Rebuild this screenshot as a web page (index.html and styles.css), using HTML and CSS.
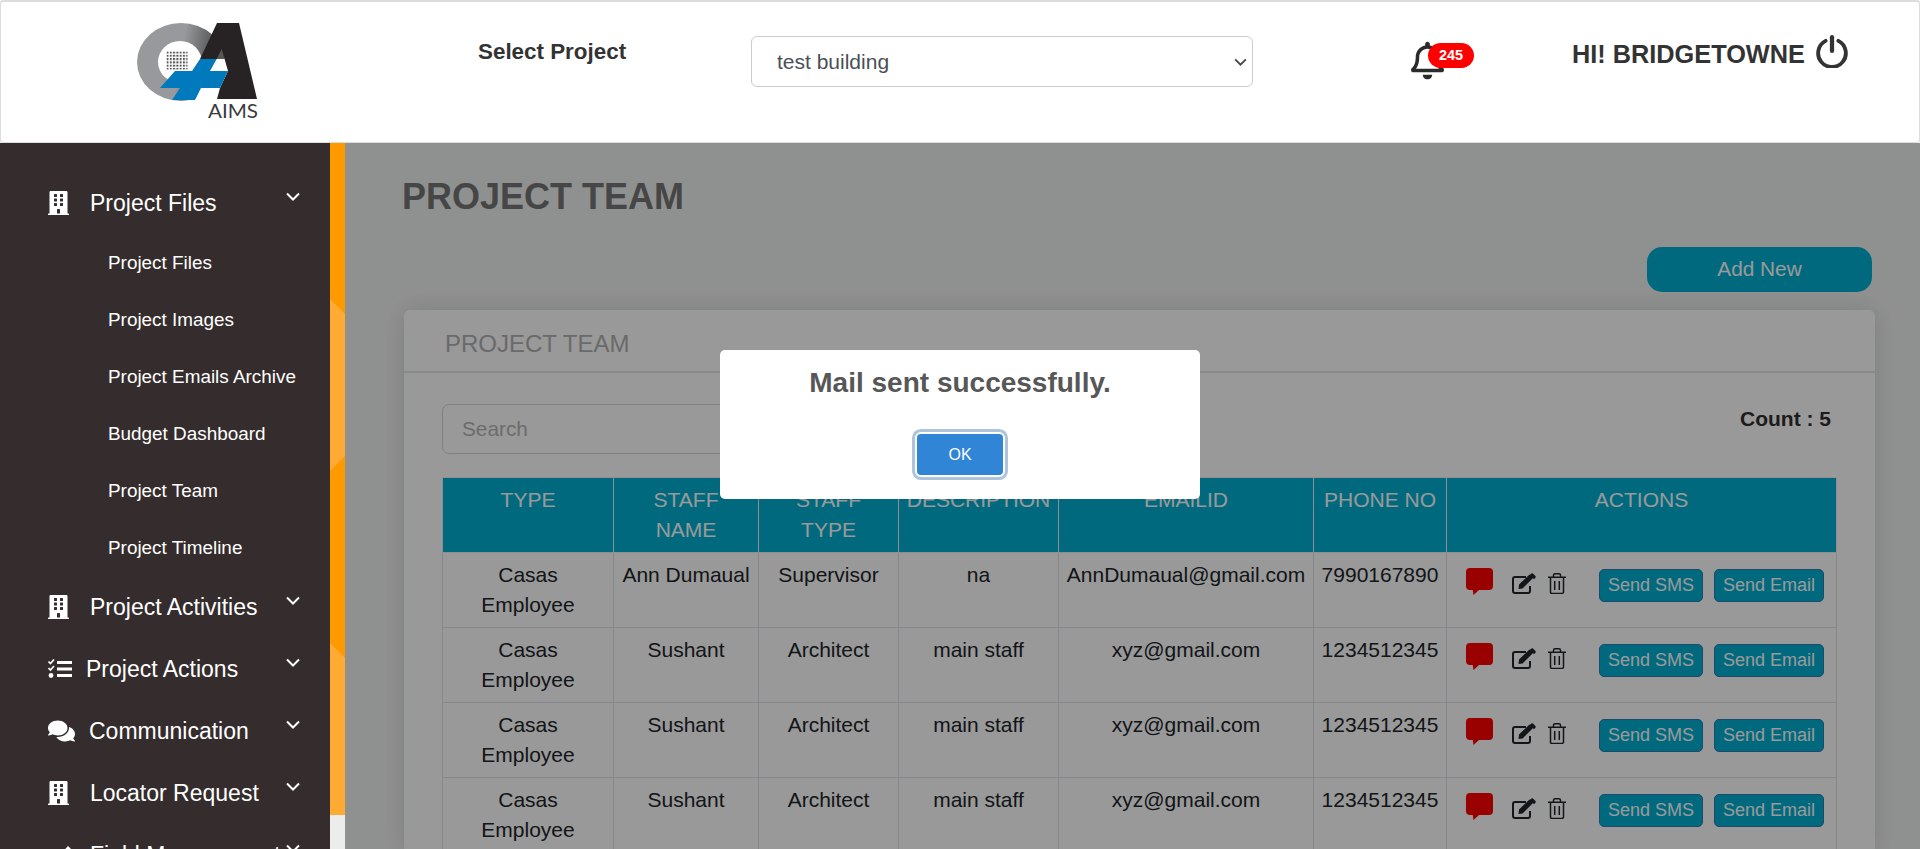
FILE: index.html
```html
<!DOCTYPE html>
<html lang="en">
<head>
<meta charset="utf-8">
<title>Project Team</title>
<link rel="stylesheet" href="styles.css">
</head>
<body>
<svg class="defs" width="0" height="0" aria-hidden="true">
  <symbol id="i-building" viewBox="0 0 448 512"><path d="M436 480h-20V24c0-13.255-10.745-24-24-24H56C42.745 0 32 10.745 32 24v456H12c-6.627 0-12 5.373-12 12v20h448v-20c0-6.627-5.373-12-12-12zM128 76c0-6.627 5.373-12 12-12h40c6.627 0 12 5.373 12 12v40c0 6.627-5.373 12-12 12h-40c-6.627 0-12-5.373-12-12V76zm0 96c0-6.627 5.373-12 12-12h40c6.627 0 12 5.373 12 12v40c0 6.627-5.373 12-12 12h-40c-6.627 0-12-5.373-12-12v-40zm52 148h-40c-6.627 0-12-5.373-12-12v-40c0-6.627 5.373-12 12-12h40c6.627 0 12 5.373 12 12v40c0 6.627-5.373 12-12 12zm76 160h-64v-84c0-6.627 5.373-12 12-12h40c6.627 0 12 5.373 12 12v84zm64-172c0 6.627-5.373 12-12 12h-40c-6.627 0-12-5.373-12-12v-40c0-6.627 5.373-12 12-12h40c6.627 0 12 5.373 12 12v40zm0-96c0 6.627-5.373 12-12 12h-40c-6.627 0-12-5.373-12-12v-40c0-6.627 5.373-12 12-12h40c6.627 0 12 5.373 12 12v40zm0-96c0 6.627-5.373 12-12 12h-40c-6.627 0-12-5.373-12-12V76c0-6.627 5.373-12 12-12h40c6.627 0 12 5.373 12 12v40z"/></symbol>
  <symbol id="i-tasks" viewBox="0 0 24 20"><path d="M9 2h15v3H9zM9 8.500h15v3H9zM9 15h15v3H9z"/><path d="M0.500 2.500l2 2L6 .5M0.500 9l2 2L6 7" fill="none" stroke="currentColor" stroke-width="1.700"/><circle cx="3" cy="16.500" r="2.400"/></symbol>
  <symbol id="i-comments" viewBox="0 0 576 512"><path d="M416 192c0-88.4-93.1-160-208-160S0 103.6 0 192c0 34.3 14.1 65.9 38 92-13.4 30.2-35.5 54.2-35.8 54.5-2.2 2.3-2.8 5.7-1.5 8.7S4.8 352 8 352c36.6 0 66.9-12.3 88.7-25 32.2 15.7 70.3 25 111.3 25 114.9 0 208-71.6 208-160zm122 220c23.9-26 38-57.7 38-92 0-66.9-53.5-124.2-129.3-148.1.9 6.6 1.3 13.3 1.3 20.1 0 105.9-107.7 192-240 192-10.8 0-21.3-.8-31.7-1.9C207.8 439.6 281.8 480 368 480c41 0 79.1-9.2 111.3-25 21.8 12.7 52.1 25 88.7 25 3.2 0 6.1-1.9 7.3-4.8 1.3-2.9.7-6.3-1.5-8.7-.3-.3-22.4-24.2-35.8-54.5z"/></symbol>
  <symbol id="i-chevron" viewBox="0 0 14 9"><path d="M1 1.500l6 6 6-6" fill="none" stroke="currentColor" stroke-width="2"/></symbol>
  <symbol id="i-field" viewBox="0 0 24 24"><path d="M3 22L20 3l3 3L8 22z"/></symbol>
  <symbol id="i-bubble" viewBox="0 0 27 27"><path d="M4 0h19a4 4 0 0 1 4 4v14a4 4 0 0 1-4 4H13l-5.500 5-.8-5H4a4 4 0 0 1-4-4V4a4 4 0 0 1 4-4z"/></symbol>
  <symbol id="i-edit" viewBox="0 0 24 21"><path d="M14 4H3a2 2 0 0 0-2 2v12a2 2 0 0 0 2 2h13a2 2 0 0 0 2-2v-5" fill="none" stroke="currentColor" stroke-width="2"/><path d="M7 11.500L17.500 1.500l3.500 3.500L10.500 15.500l-4 .5zM19 .8a1.500 1.500 0 0 1 2-.2l2.400 2.400a1.500 1.500 0 0 1-.2 2L22 6.200 17.800 2z"/></symbol>
  <symbol id="i-trash" viewBox="0 0 18 21"><path d="M2.500 5v14a1.500 1.500 0 0 0 1.500 1.500h10a1.500 1.500 0 0 0 1.500-1.500V5M0 4.200h18M5.500 4V2.200A1.500 1.500 0 0 1 7 .8h4a1.500 1.500 0 0 1 1.500 1.400V4M6.700 8v9M11.300 8v9" fill="none" stroke="currentColor" stroke-width="1.500"/></symbol>
</svg>

<header class="topbar">
  <svg class="logo" viewBox="130 15 135 110" width="135" height="110" role="img" aria-label="AIMS logo">
    <defs>
      <linearGradient id="ring" x1="0" y1="0" x2="1" y2="0.15">
        <stop offset="0" stop-color="#97999c"/>
        <stop offset="0.55" stop-color="#97999c"/>
        <stop offset="0.8" stop-color="#66686a"/>
        <stop offset="1" stop-color="#555"/>
      </linearGradient>
      <pattern id="dots" x="166.500" y="51.500" width="3.300" height="3.300" patternUnits="userSpaceOnUse">
        <rect width="2" height="2" fill="#555"/>
      </pattern>
    </defs>
    <ellipse cx="181" cy="62" rx="44" ry="39" fill="url(#ring)"/>
    <ellipse cx="180" cy="62" rx="22" ry="21" fill="#fff"/>
    <rect x="166.500" y="51.500" width="21" height="18" fill="url(#dots)"/>
    <path d="M195 88h30l-3 14h-35zM205 59h30v14h-30z" fill="#fff"/>
    <path d="M217 23H239L257 99H217L220 88L228 71L221.700 49L216.700 59H200Z" fill="#272224"/>
    <path d="M200 59H216.700L210 71H228L220 88H201L195 100H172L180 88H160L175 71H192Z" fill="#0079bd"/>
    <text class="logo-text" x="208" y="118" textLength="50" lengthAdjust="spacingAndGlyphs">AIMS</text>
  </svg>
  <div class="project-label">Select Project</div>
  <div class="select-wrap">
    <select class="project-select" aria-label="Select Project"><option>test building</option></select>
    <svg class="select-chev"><use href="#i-chevron"/></svg>
  </div>
  <div class="bell">
    <svg class="bell-icon" viewBox="0 0 448 512"><path d="M439.39 362.29c-19.32-20.76-55.47-51.99-55.47-154.29 0-77.7-54.48-139.9-127.94-155.16V32c0-17.67-14.32-32-31.98-32s-31.98 14.33-31.98 32v20.84C118.56 68.1 64.08 130.3 64.08 208c0 102.3-36.15 133.53-55.47 154.29-6 6.45-8.66 14.16-8.61 21.71.11 16.4 12.98 32 32.1 32h383.8c19.12 0 32-15.6 32.1-32 .05-7.55-2.61-15.27-8.61-21.71zM67.53 368c21.22-27.97 44.42-74.33 44.53-159.42 0-.2-.06-.38-.06-.58 0-61.86 50.14-112 112-112s112 50.14 112 112c0 .2-.06.38-.06.58.11 85.1 23.31 131.46 44.53 159.42H67.53zM224 512c35.32 0 63.97-28.65 63.97-64H160.03c0 35.35 28.65 64 63.97 64z"/></svg>
    <span class="badge">245</span>
  </div>
  <div class="greeting">HI! BRIDGETOWNE</div>
  <svg class="power" viewBox="0 0 30 31"><path d="M9 5.500A13 13 0 1 0 21 5.500" fill="none" stroke="currentColor" stroke-width="3.600" stroke-linecap="round"/><path d="M15 2v13" fill="none" stroke="currentColor" stroke-width="4" stroke-linecap="round"/></svg>
</header>

<div class="shell">
  <nav class="sidebar">
    <div class="nav-main"><svg class="nav-icon building"><use href="#i-building"/></svg><span class="nav-text">Project Files</span><svg class="chev"><use href="#i-chevron"/></svg></div>
    <a class="nav-sub">Project Files</a>
    <a class="nav-sub">Project Images</a>
    <a class="nav-sub">Project Emails Archive</a>
    <a class="nav-sub">Budget Dashboard</a>
    <a class="nav-sub">Project Team</a>
    <a class="nav-sub">Project Timeline</a>
    <div class="nav-main"><svg class="nav-icon building"><use href="#i-building"/></svg><span class="nav-text">Project Activities</span><svg class="chev"><use href="#i-chevron"/></svg></div>
    <div class="nav-main"><svg class="nav-icon tasks"><use href="#i-tasks"/></svg><span class="nav-text">Project Actions</span><svg class="chev"><use href="#i-chevron"/></svg></div>
    <div class="nav-main"><svg class="nav-icon comments"><use href="#i-comments"/></svg><span class="nav-text">Communication</span><svg class="chev"><use href="#i-chevron"/></svg></div>
    <div class="nav-main"><svg class="nav-icon building"><use href="#i-building"/></svg><span class="nav-text">Locator Request</span><svg class="chev"><use href="#i-chevron"/></svg></div>
    <div class="nav-main"><svg class="nav-icon field"><use href="#i-field"/></svg><span class="nav-text">Field Management</span><svg class="chev"><use href="#i-chevron"/></svg></div>
  </nav>
  <svg class="strip" viewBox="0 0 15 706" preserveAspectRatio="none" aria-hidden="true">
    <rect width="15" height="706" fill="#ececec"/>
    <rect width="15" height="672" fill="#ffab33"/>
    <path d="M0 0h15v171L0 156z" fill="#ff9900"/>
    <path d="M0 328l15-15v202L0 500z" fill="#ff9900"/>
  </svg>

  <main class="content">
    <h1 class="page-title">PROJECT TEAM</h1>
    <div class="toolbar"><button class="add-btn">Add New</button></div>
    <section class="card">
      <div class="card-head">PROJECT TEAM</div>
      <div class="card-body">
        <div class="filter-row">
          <input class="search" placeholder="Search" aria-label="Search">
          <div class="count">Count : 5</div>
        </div>
        <table class="team">
          <colgroup>
            <col class="c-type"><col class="c-name"><col class="c-stype"><col class="c-desc"><col class="c-email"><col class="c-phone"><col class="c-act">
          </colgroup>
          <thead>
            <tr><th>TYPE</th><th>STAFF NAME</th><th>STAFF TYPE</th><th>DESCRIPTION</th><th>EMAILID</th><th>PHONE NO</th><th>ACTIONS</th></tr>
          </thead>
          <tbody>
            <tr><td>Casas Employee</td><td>Ann Dumaual</td><td>Supervisor</td><td>na</td><td>AnnDumaual@gmail.com</td><td>7990167890</td>
              <td><div class="acts"><svg class="a-bubble"><use href="#i-bubble"/></svg><svg class="a-edit"><use href="#i-edit"/></svg><svg class="a-trash"><use href="#i-trash"/></svg><button class="mini sms">Send SMS</button><button class="mini">Send Email</button></div></td></tr>
            <tr><td>Casas Employee</td><td>Sushant</td><td>Architect</td><td>main staff</td><td>xyz@gmail.com</td><td>1234512345</td>
              <td><div class="acts"><svg class="a-bubble"><use href="#i-bubble"/></svg><svg class="a-edit"><use href="#i-edit"/></svg><svg class="a-trash"><use href="#i-trash"/></svg><button class="mini sms">Send SMS</button><button class="mini">Send Email</button></div></td></tr>
            <tr><td>Casas Employee</td><td>Sushant</td><td>Architect</td><td>main staff</td><td>xyz@gmail.com</td><td>1234512345</td>
              <td><div class="acts"><svg class="a-bubble"><use href="#i-bubble"/></svg><svg class="a-edit"><use href="#i-edit"/></svg><svg class="a-trash"><use href="#i-trash"/></svg><button class="mini sms">Send SMS</button><button class="mini">Send Email</button></div></td></tr>
            <tr><td>Casas Employee</td><td>Sushant</td><td>Architect</td><td>main staff</td><td>xyz@gmail.com</td><td>1234512345</td>
              <td><div class="acts"><svg class="a-bubble"><use href="#i-bubble"/></svg><svg class="a-edit"><use href="#i-edit"/></svg><svg class="a-trash"><use href="#i-trash"/></svg><button class="mini sms">Send SMS</button><button class="mini">Send Email</button></div></td></tr>
          </tbody>
        </table>
      </div>
    </section>
  </main>
</div>

<div class="overlay"></div>
<div class="modal-wrap">
  <div class="modal">
    <h2 class="modal-title">Mail sent successfully.</h2>
    <button class="ok">OK</button>
  </div>
</div>
</body>
</html>
```
FILE: styles.css
```css
* { box-sizing: border-box; }
html, body { margin: 0; height: 100%; overflow: hidden; }
body {
  font-family: "Liberation Sans", Arial, sans-serif;
  display: flex;
  flex-direction: column;
  background: #eff2f0;
  color: #212529;
}
.defs { position: absolute; }

/* top bar */
.topbar {
  position: relative;
  z-index: 20;
  flex: 0 0 143px;
  display: flex;
  align-items: flex-start;
  background: #fff;
  border: 1px solid #ddd;
  border-top-width: 2px;
  border-radius: 4px;
}
.logo { margin: 13px 0 0 129px; flex: none; }
.logo-text { font-family: "Lato", sans-serif; font-size: 20px; fill: #3a3a3c; }
.project-label {
  margin: 37px 0 0 213px;
  width: 273px;
  font-size: 22.4px;
  line-height: 26px;
  font-weight: 700;
  color: #333;
  white-space: nowrap;
  flex: none;
}
.select-wrap { position: relative; margin-top: 34px; flex: none; }
.project-select {
  display: block;
  width: 502px;
  height: 51px;
  padding: 0 25px;
  font: 21px "Liberation Sans", Arial, sans-serif;
  color: #495057;
  background: #fff;
  border: 1px solid #ccc;
  border-radius: 6px;
  appearance: none;
  -webkit-appearance: none;
}
.select-chev {
  position: absolute;
  right: 6px;
  top: 22px;
  width: 13px;
  height: 8px;
  color: #444;
  pointer-events: none;
}
.bell { position: relative; margin: 39px 0 0 158px; width: 33px; height: 39px; flex: none; }
.bell-icon { display: block; width: 33px; height: 39px; fill: #2b2b2b; }
.badge {
  position: absolute;
  left: 17px;
  top: 2px;
  width: 46px;
  height: 25px;
  border-radius: 13px;
  background: #fe0000;
  color: #fff;
  font-size: 14.4px;
  font-weight: 700;
  line-height: 25px;
  text-align: center;
}
.greeting {
  margin: 38px 0 0 128px;
  font-size: 25.3px;
  line-height: 28px;
  font-weight: 700;
  color: #333;
  white-space: nowrap;
  flex: none;
}
.power { margin: 33px 0 0 11px; width: 32px; height: 33px; color: #333; flex: none; }

/* shell */
.shell { flex: 1; min-height: 0; display: flex; }

.sidebar {
  flex: 0 0 330px;
  padding-top: 29px;
  background: #352d2d;
  color: #fff;
  overflow: hidden;
  position: relative;
  z-index: 20;
}
.nav-main {
  height: 62px;
  display: flex;
  align-items: center;
  padding-left: 48px;
}
.nav-text { font-size: 23px; white-space: nowrap; flex: 1; }
.nav-icon { fill: #fff; color: #fff; flex: none; }
.nav-icon.building { width: 21px; height: 24px; margin-right: 21px; }
.nav-icon.tasks { width: 24px; height: 20px; margin-right: 14px; }
.nav-icon.comments { width: 27px; height: 24px; margin-right: 14px; }
.nav-icon.field { width: 24px; height: 24px; margin-right: 18px; }
.chev {
  width: 14px;
  height: 9px;
  margin: 0 30px 14px 0;
  color: #fff;
  flex: none;
}
.nav-sub {
  display: flex;
  align-items: center;
  height: 57px;
  padding-left: 108px;
  font-size: 18.9px;
  color: #fff;
  white-space: nowrap;
}
.strip { flex: 0 0 15px; height: 706px; position: relative; z-index: 20; }

/* main */
.content { flex: 1; min-width: 0; padding: 32px 0 0 57px; }
.page-title {
  margin: 0;
  font-size: 36px;
  line-height: 44px;
  font-weight: 700;
  color: #767676;
}
.toolbar { display: flex; justify-content: flex-end; margin: 28px 48px 18px 0; }
.add-btn {
  width: 225px;
  height: 45px;
  padding-bottom: 2px;
  border: 0;
  border-radius: 15px;
  background: #00b0d3;
  color: #fff;
  font: 20.8px "Liberation Sans", Arial, sans-serif;
}
.card {
  margin-left: 2px;
  width: 1471px;
  background: #fff;
  border-radius: 6px;
  box-shadow: 0 0 24px rgba(0,0,0,.12);
}
.card-head {
  height: 63px;
  padding: 19px 0 0 41px;
  font-size: 24px;
  line-height: 30px;
  color: #b1b1b1;
  border-bottom: 2px solid #e4e4e4;
}
.card-body { padding: 31px 39px 0 38px; }
.filter-row { display: flex; justify-content: space-between; align-items: flex-start; margin-bottom: 23px; }
.search {
  width: 560px;
  height: 50px;
  padding: 0 19px;
  font: 20.8px "Liberation Sans", Arial, sans-serif;
  border: 1px solid #d6d6d6;
  border-radius: 7px;
  background: #fff;
}
.search::placeholder { color: #b5b5b5; opacity: 1; }
.count { margin: 0 5px 0 0; font-size: 21px; line-height: 30px; font-weight: 700; color: #2f2f2f; }

.team { width: 1394px; table-layout: fixed; border-collapse: collapse; font-size: 21px; line-height: 30px; }
.c-type { width: 171px; } .c-name { width: 145px; } .c-stype { width: 140px; } .c-desc { width: 160px; }
.c-email { width: 255px; } .c-phone { width: 133px; } .c-act { width: 390px; }
.team th {
  height: 74px;
  padding: 7px;
  font-weight: 400;
  color: #fff;
  background: #00b0d3;
  border: 1px solid #eee;
  vertical-align: top;
  text-align: center;
}
.team td {
  height: 75px;
  padding: 7px;
  text-align: center;
  vertical-align: top;
  border: 1px solid #dee2e6;
}
.acts { display: flex; align-items: flex-start; padding: 7px 0 0 12px; }
.a-bubble { width: 27px; height: 27px; margin-top: 1px; fill: #ff0000; flex: none; }
.a-edit { width: 24px; height: 21px; margin: 6px 0 0 19px; fill: #212529; color: #212529; flex: none; }
.a-trash { width: 18px; height: 21px; margin: 6px 0 0 12px; color: #212529; flex: none; }
.mini {
  height: 33px;
  margin: 2px 0 0 11px;
  padding: 0 8px;
  border: 1px solid #3378b5;
  border-radius: 5px;
  background: #00b0d3;
  color: #fff;
  font: 18px "Liberation Sans", Arial, sans-serif;
  white-space: nowrap;
  flex: none;
}
.mini.sms { margin-left: 33px; }

/* modal */
.overlay { position: fixed; left: 345px; top: 143px; right: 0; bottom: 0; background: rgba(0,0,0,.4); z-index: 10; }
.modal-wrap { position: fixed; inset: 0; display: flex; align-items: center; justify-content: center; z-index: 30; }
.modal {
  width: 480px;
  height: 149px;
  padding-top: 13px;
  background: #fff;
  border-radius: 5px;
  display: flex;
  flex-direction: column;
  align-items: center;
}
.modal-title { margin: 0 0 31px; font-size: 28px; line-height: 40px; font-weight: 700; color: #575757; }
.ok {
  width: 86px;
  height: 41px;
  border: 0;
  border-radius: 4px;
  background: #3085d6;
  color: #fff;
  font: 16px "Liberation Sans", Arial, sans-serif;
  box-shadow: 0 0 0 2px #fff, 0 0 0 5px #adc4dc;
}
```
